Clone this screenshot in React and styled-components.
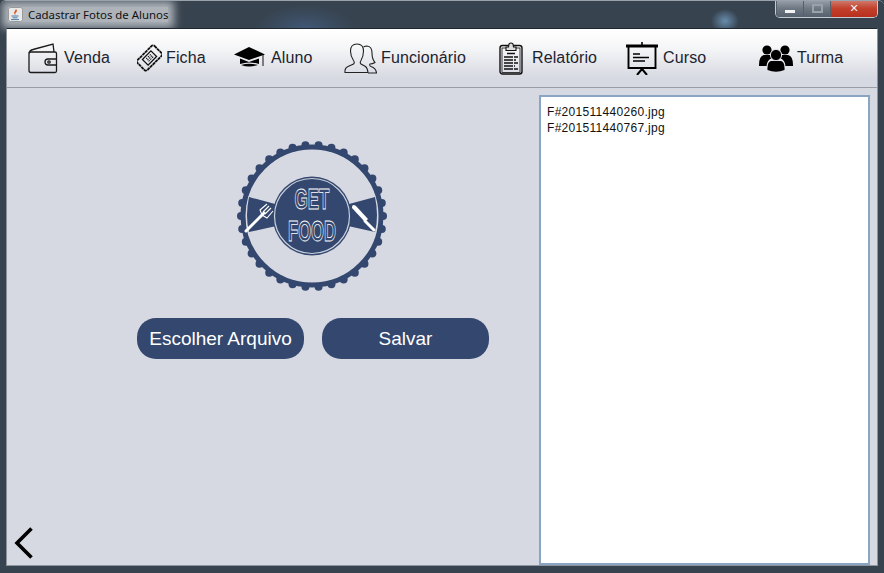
import React from "react";
import styled, { createGlobalStyle } from "styled-components";

const GlobalStyle = createGlobalStyle`
	html, body {
		margin: 0;
		padding: 0;
		background: #37434f;
	}
	* {
		box-sizing: border-box;
	}
`;

const NAVY = "#33476f";

const tools = [
	{ name: "Venda", icon: <WalletIcon />, width: 110, iconWidth: 37 },
	{ name: "Ficha", icon: <TicketIcon />, width: 97, iconWidth: 29 },
	{ name: "Aluno", icon: <CapIcon />, width: 110, iconWidth: 37 },
	{ name: "Funcionário", icon: <PeopleIcon />, width: 155, iconWidth: 37 },
	{ name: "Relatório", icon: <ClipboardIcon />, width: 127, iconWidth: 33 },
	{ name: "Curso", icon: <BoardIcon />, width: 133, iconWidth: 37 },
	{ name: "Turma", icon: <GroupIcon />, width: 120, iconWidth: 38 },
];

const files = ["F#201511440260.jpg", "F#201511440767.jpg"];

function WalletIcon() {
	return (
		<svg width="32" height="32" viewBox="0 0 32 32" fill="none" stroke="#1a1a1a" strokeWidth="1.3">
			<path d="M2 12 L2 28.5 Q2 30.5 4 30.5 L28 30.5 Q29.5 30.5 29.5 29 L29.5 11.5 Q29.5 10 28 10 L4 10 Q2 10 2 12 Z" />
			<path d="M2 11 Q3 8 6 7.5 L26 2 L27 10" />
			<path d="M30 17 L21 17 Q18 17 18 20 Q18 23 21 23 L30 23" />
			<circle cx="22" cy="20" r="1.2" />
		</svg>
	);
}

function TicketIcon() {
	return (
		<svg width="25" height="28" viewBox="0 0 25 28" fill="none" stroke="#111">
			<g transform="rotate(45 12.5 14)">
				<rect x="5.5" y="2" width="14" height="24" rx="2" strokeWidth="1.8" strokeDasharray="3.2 0.5" />
				<rect x="8.5" y="8" width="8" height="12" strokeWidth="1.3" />
				<path d="M10.8 10.5 V17.5 M12.5 10.5 V17.5 M14.2 10.5 V17.5" strokeWidth="1" strokeDasharray="1.5 1" />
			</g>
		</svg>
	);
}

function CapIcon() {
	return (
		<svg width="32" height="22" viewBox="0 0 32 22">
			<path d="M15 0 L31 7.5 L15 13 L0 7.5 Z" fill="#000" />
			<path d="M6 11.5 L15 15 L25 11.5 L25 17 Q15 14 6 17 Z" fill="#000" />
			<path d="M7 18 Q15 15.5 24 18 Q15 21 7 18 Z" fill="#000" />
			<path d="M29 8 V19" stroke="#333" strokeWidth="1.2" />
		</svg>
	);
}

function PeopleIcon() {
	return (
		<svg width="33" height="31" viewBox="0 0 33 31" fill="none" stroke="#222" strokeWidth="1.1">
			<path d="M20 29.5 L1 29.5 Q0.5 25 4 23.5 L9.5 21 Q11 19.5 9.5 17.5 Q6.5 13 6.5 8 Q6.5 1 13 1 Q19.5 1 19.5 8 Q19.5 13 17 17.5 Q15.5 19.5 17 21 L21.5 23.5 Q23.5 25 24 29.5 L20 29.5" />
			<path d="M19.5 4 Q21 3 23 3 Q28 3.5 28 10 Q28 16 31 19.5 Q28.5 21 26 21 Q25 22.5 27 23.5 Q32 25 32.5 30 L24 30" />
		</svg>
	);
}

function ClipboardIcon() {
	return (
		<svg width="24" height="33" viewBox="0 0 24 33" fill="none" stroke="#111">
			<rect x="1" y="3.5" width="22" height="28.5" rx="2.5" strokeWidth="1.4" />
			<rect x="3" y="6" width="18" height="24.5" strokeWidth="0.8" />
			<path d="M7 5 L9.5 5 L10 2 Q12 0 14 2 L14.5 5 L17 5 L17 8.5 L7 8.5 Z" fill="#ddd" strokeWidth="1.1" />
			<path d="M8 11.5 H16" strokeWidth="1.6" />
			<path d="M5 15 H19 M5 18 H17 M5 21 H19 M5 24 H16 M5 27 H19" strokeWidth="1.5" strokeDasharray="9 1" />
		</svg>
	);
}

function BoardIcon() {
	return (
		<svg width="32" height="33" viewBox="0 0 32 33" fill="none" stroke="#000">
			<path d="M16 0 V3" strokeWidth="1.6" />
			<path d="M0 4 H32" strokeWidth="3" />
			<path d="M2.5 5 V26 H29.5 V5" strokeWidth="1.9" />
			<path d="M7 12 H14 M7 15.5 H23 M7 19 H19" strokeWidth="1.6" />
			<path d="M16 26 V29 M16 27 L11 33 M16 27 L21 33" strokeWidth="2" />
		</svg>
	);
}

function GroupIcon() {
	return (
		<svg width="34" height="28" viewBox="0 0 34 28" fill="#000">
			<circle cx="8" cy="6" r="4.6" />
			<circle cx="26" cy="6" r="4.6" />
			<path d="M0 21 Q0 12 5 11 L11 11 Q13 12 13 14 Q8 16 7.5 22 L0 22 Z" />
			<path d="M34 21 Q34 12 29 11 L23 11 Q21 12 21 14 Q26 16 26.5 22 L34 22 Z" />
			<circle cx="17" cy="11" r="5.6" stroke="#dfe1e7" strokeWidth="1" />
			<path d="M8.5 26 Q8 18 12 17 L22 17 Q26 18 25.5 26 Q17 29.5 8.5 26 Z" />
		</svg>
	);
}

function JavaIcon() {
	return (
		<svg width="15" height="15" viewBox="0 0 15 15">
			<rect x="0.5" y="0.5" width="14" height="14" rx="2" fill="#e9e9e9" stroke="#9a9a9a" />
			<path d="M8 2 Q10 4 7.5 6 Q6.5 7 8 8 Q6 7.5 6 6 Q6.5 4.5 8 2" fill="#d9531e" />
			<path d="M3.5 9 H10.5 M4.5 10.8 H9.5 M3 12.6 H11" stroke="#4c7ca8" strokeWidth="1" />
		</svg>
	);
}

function LogoMark() {
	const bumps = Array.from({ length: 34 }, (_, i) => {
		const a = (i * Math.PI * 2) / 34;
		return { x: 76 + 71 * Math.cos(a), y: 76 + 71 * Math.sin(a) };
	});
	return (
		<svg width="152" height="152" viewBox="0 0 152 152">
			{bumps.map((b, i) => (
				<circle key={i} cx={b.x} cy={b.y} r="4" fill={NAVY} />
			))}
			<circle cx="76" cy="76" r="69" fill="none" stroke={NAVY} strokeWidth="5" />
			<path d="M13 57 L76 74 L139 57 Q143 76 139 92 L76 78 L13 92 Q9 76 13 57 Z" fill={NAVY} />
			<circle cx="76" cy="76" r="39.5" fill={NAVY} />
			<circle cx="76" cy="76" r="37.5" fill="none" stroke="#c9d0dc" strokeWidth="1.2" />
			{/* fork */}
			<path d="M10 91 L28 73" stroke="#fff" strokeWidth="3" strokeLinecap="round" />
			<path d="M26 75 L24 70 L31 64 M26 75 L31 78 L37 71 M27 72 L33 66 M29 74 L35 68" stroke="#fff" strokeWidth="1.1" fill="none" />
			{/* knife */}
			<path d="M116 68 Q116 63 120 66 L132 79 L129 82 Z" fill="#fff" />
			<path d="M129 81 L138 90" stroke="#fff" strokeWidth="3" strokeLinecap="round" />
			<LogoWord x="76" y="69" textLength="35" lengthAdjust="spacingAndGlyphs" textAnchor="middle">
				GET
			</LogoWord>
			<LogoWord x="76" y="100.5" textLength="48" lengthAdjust="spacingAndGlyphs" textAnchor="middle">
				FOOD
			</LogoWord>
		</svg>
	);
}

const App = () => {
	return (
		<>
			<GlobalStyle />
			<StyledWindow>
				<StyledTitleBar>
					<StyledTitle>
						<JavaIcon />
						<span>Cadastrar Fotos de Alunos</span>
					</StyledTitle>
					<StyledControls>
						<StyledControl>
							<StyledMinimize />
						</StyledControl>
						<StyledControl>
							<StyledMaximize />
						</StyledControl>
						<StyledControl $close>
							<StyledClose>✕</StyledClose>
						</StyledControl>
					</StyledControls>
				</StyledTitleBar>
				<StyledContent>
					<StyledToolbar>
						{tools.map((tool) => (
							<StyledTool key={tool.name} $width={tool.width}>
								<StyledToolIcon $width={tool.iconWidth}>{tool.icon}</StyledToolIcon>
								{tool.name}
							</StyledTool>
						))}
					</StyledToolbar>
					<StyledMain>
						<StyledLeft>
							<StyledUpload>
								<StyledLogo>
									<LogoMark />
								</StyledLogo>
								<StyledActions>
									<StyledButton>Escolher Arquivo</StyledButton>
									<StyledButton>Salvar</StyledButton>
								</StyledActions>
							</StyledUpload>
							<StyledBack>
								<svg width="20" height="34" viewBox="0 0 20 34" fill="none" stroke="#000" strokeWidth="3.6">
									<path d="M17.5 2.5 L3 17 L17.5 31.5" />
								</svg>
							</StyledBack>
						</StyledLeft>
						<StyledFileList>
							{files.map((file) => (
								<div key={file}>{file}</div>
							))}
						</StyledFileList>
					</StyledMain>
				</StyledContent>
			</StyledWindow>
		</>
	);
};

export default App;

const LogoWord = styled.text`
	font-family: "Liberation Sans", sans-serif;
	font-size: 29px;
	font-weight: 700;
	fill: none;
	stroke: #fff;
	stroke-width: 0.85px;
`;

const StyledWindow = styled.div`
	width: 884px;
	height: 573px;
	display: flex;
	flex-direction: column;
	overflow: hidden;
	background: #37434f;
	border-top: 1px solid #9aa3ab;
	border-radius: 6px 6px 0 0;
`;

const StyledTitleBar = styled.div`
	height: 27px;
	flex: none;
	display: flex;
	justify-content: space-between;
	align-items: flex-start;
	padding: 0 6px 0 8px;
	background:
		radial-gradient(ellipse 50px 24px at 305px 28px, rgba(72, 104, 150, 0.55), rgba(72, 104, 150, 0) 100%),
		radial-gradient(ellipse 14px 12px at 725px 20px, rgba(120, 165, 205, 0.75), rgba(120, 165, 205, 0) 100%),
		#37434f;
`;

const StyledTitle = styled.div`
	display: flex;
	align-items: center;
	gap: 5px;
	height: 15px;
	margin-top: 6px;
	background: #adb3b9;
	box-shadow: 0 0 9px 6px #adb3b9;
	font-family: "Noto Sans", "Open Sans", sans-serif;
	font-size: 11.4px;
	color: #111;
`;

const StyledControls = styled.div`
	display: flex;
	height: 18px;
	margin-top: -1px;
	border: 1px solid #c5cbd1;
	border-top: none;
	border-radius: 0 0 5px 5px;
	overflow: hidden;
`;

const StyledControl = styled.div`
	width: ${(p) => (p.$close ? "47px" : "27px")};
	display: flex;
	align-items: center;
	justify-content: center;
	border-left: 1px solid #55606b;
	background: ${(p) =>
		p.$close
			? "linear-gradient(#d17f72, #c2402c 50%, #b8301e)"
			: "linear-gradient(#9aa3ac, #6d7883 50%, #55616d)"};
`;

const StyledMinimize = styled.div`
	width: 10px;
	height: 3px;
	margin-top: 5px;
	background: #f2f2f2;
`;

const StyledMaximize = styled.div`
	width: 11px;
	height: 9px;
	border: 2px solid #9aa2a9;
`;

const StyledClose = styled.div`
	font-family: "DejaVu Sans", sans-serif;
	font-size: 11px;
	font-weight: 700;
	color: #f4f4f4;
`;

const StyledContent = styled.div`
	flex: 1;
	display: flex;
	flex-direction: column;
	margin: 0 6px 7px;
	border: 1px solid #1f2730;
	border-bottom-color: #8d949b;
	border-left-color: #8d949b;
	border-right-color: #8d949b;
	background: #d6d9e1;
`;

const StyledToolbar = styled.div`
	height: 59px;
	flex: none;
	display: flex;
	align-items: center;
	padding-left: 20px;
	border-bottom: 1px solid #999da4;
	background: linear-gradient(#ffffff, #f6f7f8 30%, #d6d9e1 85%);
`;

const StyledTool = styled.div`
	width: ${(p) => p.$width}px;
	flex: none;
	display: flex;
	align-items: center;
	font-family: "Liberation Sans", sans-serif;
	font-size: 16px;
	letter-spacing: 0.12px;
	color: #1c2330;
`;

const StyledToolIcon = styled.div`
	width: ${(p) => p.$width}px;
	flex: none;
	display: flex;
	align-items: center;
`;

const StyledMain = styled.div`
	flex: 1;
	min-height: 0;
	display: flex;
`;

const StyledLeft = styled.div`
	width: 532px;
	flex: none;
	display: flex;
	flex-direction: column;
	justify-content: space-between;
`;

const StyledUpload = styled.div`
	display: flex;
	flex-direction: column;
	align-items: center;
	gap: 26px;
	width: 352px;
	margin: 52px 0 0 130px;
`;

const StyledLogo = styled.div`
	display: flex;
	margin-right: 2px;
`;

const StyledActions = styled.div`
	display: flex;
	flex: none;
	gap: 18px;
`;

const StyledButton = styled.div`
	width: 167px;
	height: 41px;
	display: flex;
	align-items: center;
	justify-content: center;
	border-radius: 19px;
	background: ${NAVY};
	font-family: "Liberation Sans", sans-serif;
	font-size: 19px;
	color: #fff;
`;

const StyledBack = styled.div`
	display: flex;
	margin: 0 0 5px 7px;
`;

const StyledFileList = styled.div`
	width: 331px;
	flex: none;
	margin: 7px 0 0 0;
	height: 470px;
	padding: 7px 6px;
	border: 2px solid #8aa5c4;
	background: #fff;
	font-family: "Liberation Sans", sans-serif;
	font-size: 12px;
	letter-spacing: 0.3px;
	line-height: 16px;
	color: #111;
`;
